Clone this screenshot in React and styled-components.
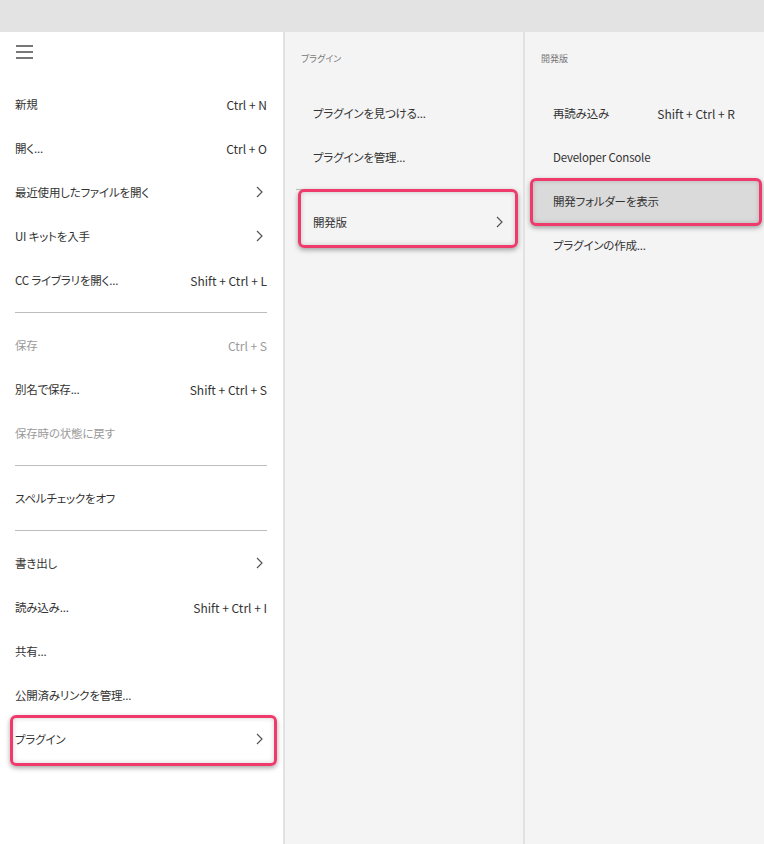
import styled, { createGlobalStyle } from 'styled-components';

const GlobalStyle = createGlobalStyle`
  body {
    margin: 0;
    font-family: "Noto Sans CJK JP", "Noto Sans", sans-serif;
    font-feature-settings: "palt";
    color: #333;
  }
`;

const Page = styled.div`
  display: flex;
  flex-direction: column;
  width: 764px;
  height: 844px;
  overflow: hidden;
`;

const TopBar = styled.div`
  height: 32px;
  background-color: #e3e3e3;
  flex-shrink: 0;
`;

const Columns = styled.div`
  display: flex;
  flex: 1;
`;

const Panel = styled.div`
  width: ${(p) => p.$width}px;
  flex-shrink: 0;
  background-color: ${(p) => p.$bg};
  border-right: ${(p) => (p.$last ? 'none' : '2px solid #e2e2e2')};
  padding: 0 ${(p) => p.$right}px 0 ${(p) => p.$left}px;
  box-sizing: border-box;
`;

const MenuBar = styled.div`
  height: 50px;
  display: flex;
  align-items: flex-start;
  padding-top: 13px;
  box-sizing: border-box;
  padding-left: 1px;
`;

const PanelTitle = styled.div`
  height: 59px;
  padding: 20px 0 0 5px;
  box-sizing: border-box;
  font-size: 9px;
  line-height: 14px;
  color: #777;
`;

const Row = styled.div`
  position: relative;
  height: 44px;
  display: flex;
  align-items: center;
  justify-content: space-between;
  padding-left: ${(p) => p.$indent || 0}px;
  color: ${(p) => (p.$disabled ? '#9a9a9a' : '#333')};

  & > * {
    position: relative;
    z-index: 1;
  }

  ${(p) =>
    p.$mark &&
    `
    &::after {
      content: "";
      position: absolute;
      inset: ${p.$mark};
      border: 3px solid #ef3a6c;
      border-radius: 6px;
      background-color: ${p.$active ? '#dadada' : 'transparent'};
      box-shadow: 0 2px 5px rgba(0, 0, 0, 0.35),
        inset 0 0 5px rgba(0, 0, 0, 0.18);
      z-index: 0;
    }
  `}
`;

const Label = styled.span`
  white-space: nowrap;
  font-size: 11.5px;
  letter-spacing: -0.2px;
`;

const Shortcut = styled.span`
  white-space: nowrap;
  font-size: 12px;
`;

const Divider = styled.div`
  height: 1px;
  margin: 10px 0;
  background-color: #bdbdbd;
`;

const ChevronWrap = styled.span`
  display: flex;
  margin-right: 4px;
`;

function Chevron() {
  return (
    <ChevronWrap>
      <svg width="7" height="12" viewBox="0 0 7 12">
        <path d="M1 1 L6 6 L1 11" fill="none" stroke="#555" strokeWidth="1.2" />
      </svg>
    </ChevronWrap>
  );
}

function Hamburger() {
  return (
    <svg width="17" height="14" viewBox="0 0 17 14">
      <g stroke="#555" strokeWidth="1.6">
        <line x1="0" y1="1" x2="17" y2="1" />
        <line x1="0" y1="7" x2="17" y2="7" />
        <line x1="0" y1="13" x2="17" y2="13" />
      </g>
    </svg>
  );
}

function Item({ label, shortcut, sub, disabled, indent, mark, active }) {
  return (
    <Row $disabled={disabled} $indent={indent} $mark={mark} $active={active}>
      <Label>{label}</Label>
      {shortcut && <Shortcut>{shortcut}</Shortcut>}
      {sub && <Chevron />}
    </Row>
  );
}

export default function App() {
  return (
    <Page>
      <GlobalStyle />
      <TopBar />
      <Columns>
        <Panel $width={285} $bg="#ffffff" $left={15} $right={16}>
          <MenuBar>
            <Hamburger />
          </MenuBar>
          <Item label="新規" shortcut="Ctrl + N" />
          <Item label="開く..." shortcut="Ctrl + O" />
          <Item label="最近使用したファイルを開く" sub />
          <Item label="UI キットを入手" sub />
          <Item label="CC ライブラリを開く..." shortcut="Shift + Ctrl + L" />
          <Divider />
          <Item label="保存" shortcut="Ctrl + S" disabled />
          <Item label="別名で保存..." shortcut="Shift + Ctrl + S" />
          <Item label="保存時の状態に戻す" disabled />
          <Divider />
          <Item label="スペルチェックをオフ" />
          <Divider />
          <Item label="書き出し" sub />
          <Item label="読み込み..." shortcut="Shift + Ctrl + I" />
          <Item label="共有..." />
          <Item label="公開済みリンクを管理..." />
          <Item label="プラグイン" sub mark="-2px -10px -5px -5px" />
        </Panel>
        <Panel $width={240} $bg="#f4f4f4" $left={11} $right={16}>
          <PanelTitle>プラグイン</PanelTitle>
          <Item label="プラグインを見つける..." indent={17} />
          <Item label="プラグインを管理..." indent={17} />
          <Divider />
          <Item label="開発版" sub indent={17} mark="-11px -11px -4px 2px" />
        </Panel>
        <Panel $width={239} $bg="#f4f4f4" $left={11} $right={29} $last>
          <PanelTitle>開発版</PanelTitle>
          <Item label="再読み込み" shortcut="Shift + Ctrl + R" indent={17} />
          <Item label="Developer Console" indent={17} />
          <Item
            label="開発フォルダーを表示"
            indent={17}
            mark="-1px -27px -3px -6px"
            active
          />
          <Item label="プラグインの作成..." indent={17} />
        </Panel>
      </Columns>
    </Page>
  );
}
